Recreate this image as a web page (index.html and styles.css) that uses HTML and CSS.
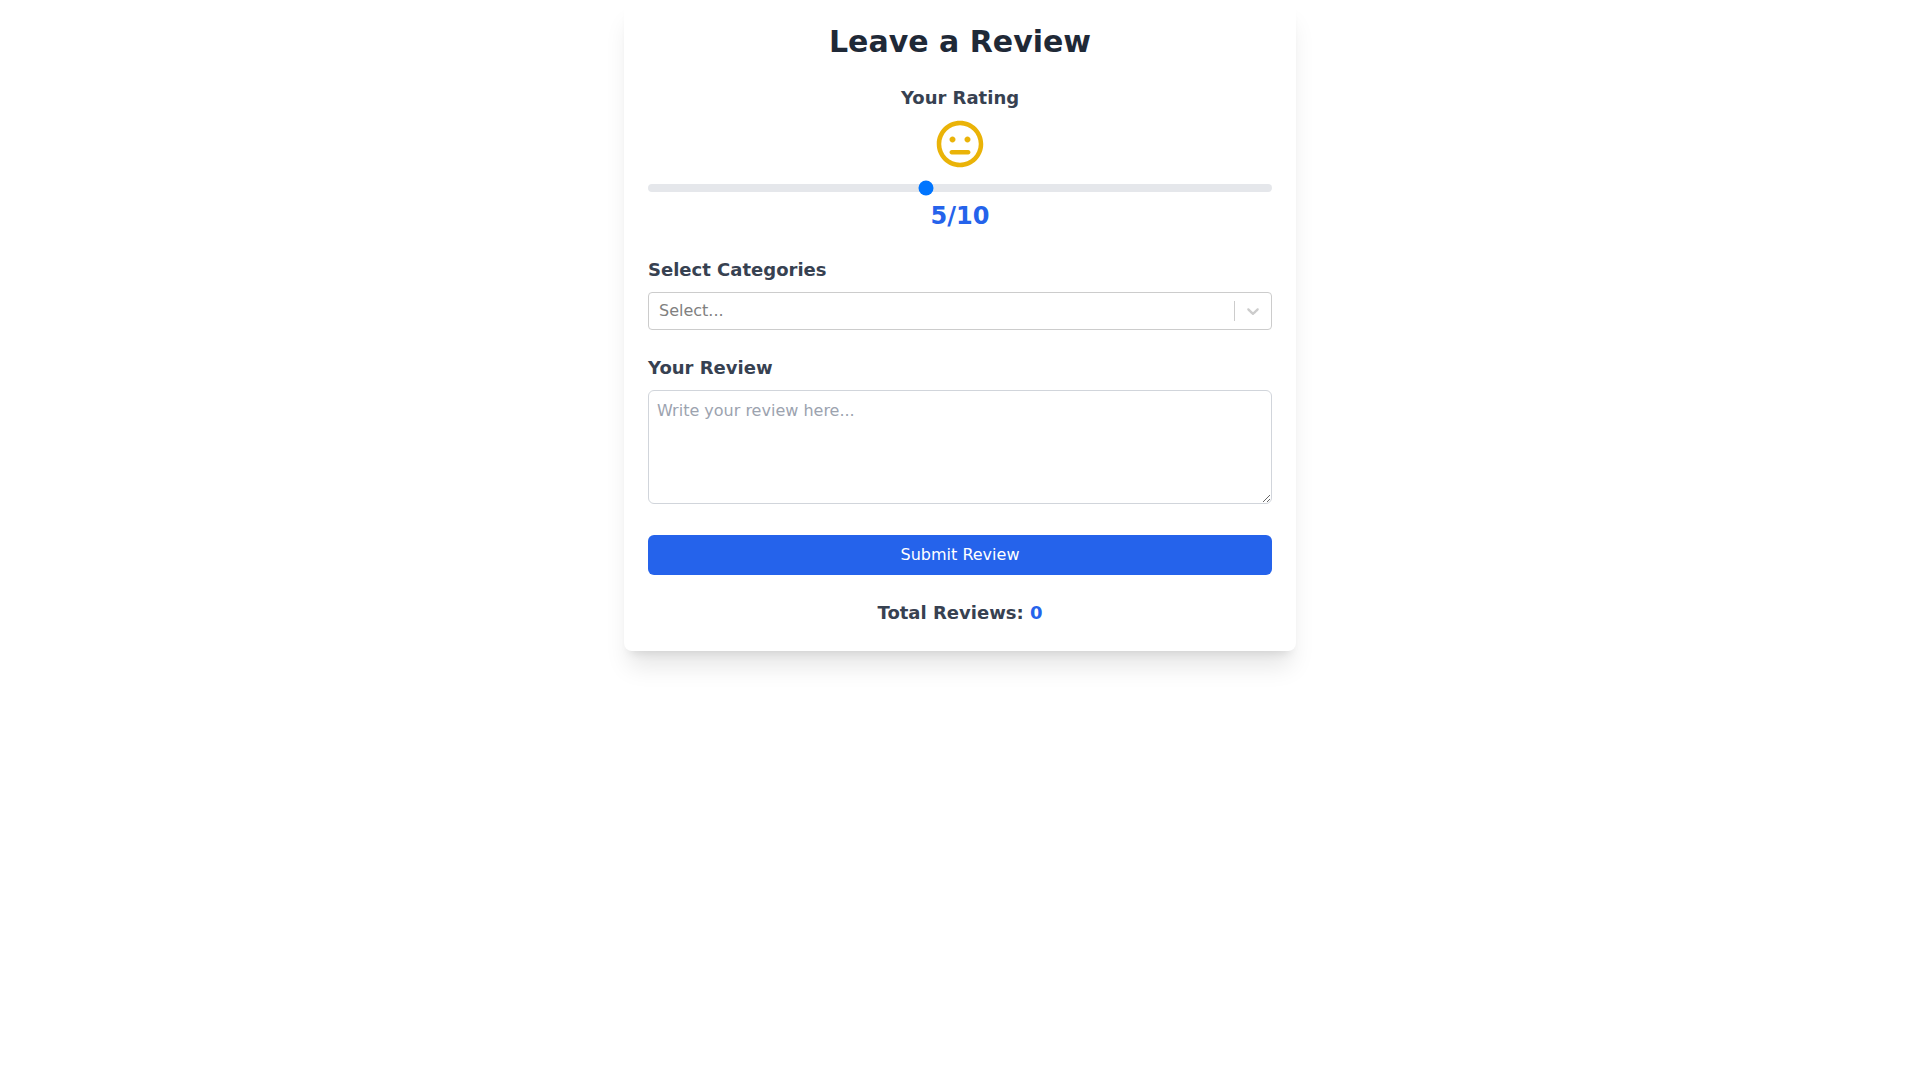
FILE: index.html
```html
<!DOCTYPE html>
<html lang="en">
<head>
  <meta charset="UTF-8" />
  <meta name="viewport" content="width=device-width, initial-scale=1.0" />
  <title>Leave a Review</title>
  <link rel="stylesheet" href="styles.css">
</head>
<body>
  <main class="review-card">
    <h2>Leave a Review</h2>

    <form id="reviewForm">
      <div class="field rating">
        <label for="rating">Your Rating</label>
        <svg class="face" viewBox="0 0 496 512" fill="currentColor" aria-hidden="true">
          <path d="M248 8C111 8 0 119 0 256s111 248 248 248 248-111 248-248S385 8 248 8zm0 448c-110.3 0-200-89.7-200-200S137.7 56 248 56s200 89.7 200 200-89.7 200-200 200zm-80-216c17.7 0 32-14.3 32-32s-14.3-32-32-32-32 14.3-32 32 14.3 32 32 32zm160-64c-17.7 0-32 14.3-32 32s14.3 32 32 32 32-14.3 32-32-14.3-32-32-32zm8 144H160c-13.2 0-24 10.8-24 24s10.8 24 24 24h176c13.2 0 24-10.8 24-24s-10.8-24-24-24z"/>
        </svg>
        <input type="range" id="rating" min="1" max="10" value="5" />
        <p class="score"><span id="ratingValue">5</span>/10</p>
      </div>

      <div class="field">
        <label for="category">Select Categories</label>
        <div class="select-box">
          <select id="category">
            <option value="">Select...</option>
            <option value="service">Service</option>
            <option value="quality">Quality</option>
            <option value="price">Price</option>
          </select>
          <span class="separator"></span>
          <svg class="chevron" viewBox="0 0 20 20" fill="currentColor" aria-hidden="true">
            <path d="M4.516 7.548c0.436-0.446 1.043-0.481 1.576 0l3.908 3.747 3.908-3.747c0.533-0.481 1.141-0.446 1.574 0 0.436 0.445 0.408 1.197 0 1.615-0.406 0.418-4.695 4.502-4.695 4.502-0.217 0.223-0.502 0.335-0.787 0.335s-0.57-0.112-0.789-0.335c0 0-4.287-4.084-4.695-4.502s-0.436-1.17 0-1.615z"/>
          </svg>
        </div>
      </div>

      <div class="field">
        <label for="review">Your Review</label>
        <textarea id="review" rows="4" placeholder="Write your review here..."></textarea>
      </div>

      <button type="submit" class="submit">Submit Review</button>
    </form>

    <p class="total">Total Reviews: <span id="totalReviews">0</span></p>
  </main>

  <script>
    const form = document.getElementById('reviewForm');
    const rating = document.getElementById('rating');
    const ratingValue = document.getElementById('ratingValue');
    const review = document.getElementById('review');
    const totalReviews = document.getElementById('totalReviews');
    let total = 0;

    rating.addEventListener('input', () => {
      ratingValue.textContent = rating.value;
    });

    form.addEventListener('submit', e => {
      e.preventDefault();
      if (!review.value.trim()) return;
      total++;
      totalReviews.textContent = total;
      form.reset();
      ratingValue.textContent = rating.value;
    });
  </script>
</body>
</html>
```
FILE: styles.css
```css
* {
  margin: 0;
  padding: 0;
  box-sizing: border-box;
}
body {
  min-height: 100vh;
  font-family: "DejaVu Sans", sans-serif;
  font-size: 16px;
  line-height: 24px;
  background: #fff;
  color: #374151;
}

/* CARD */
.review-card {
  max-width: 672px;
  margin: 0 auto;
  padding: 24px;
  background: #fff;
  border-radius: 8px;
  box-shadow: 0 20px 25px -5px rgba(0,0,0,0.1), 0 8px 10px -6px rgba(0,0,0,0.1);
}
h2 {
  margin-bottom: 24px;
  font-size: 30px;
  line-height: 36px;
  text-align: center;
  color: #1f2937;
}

/* FIELDS */
.field {
  margin-bottom: 24px;
}
.field label {
  display: block;
  margin-bottom: 8px;
  font-size: 18px;
  line-height: 28px;
  font-weight: bold;
}

/* RATING */
.rating {
  text-align: center;
}
.face {
  display: block;
  width: 48px;
  height: 48px;
  margin: 0 auto 16px;
  color: #eab308;
}
.rating input {
  display: block;
  width: 100%;
  height: 8px;
  appearance: none;
  background: #e5e7eb;
  border-radius: 8px;
  cursor: pointer;
}
.score {
  margin-top: 8px;
  font-size: 24px;
  line-height: 32px;
  font-weight: bold;
  color: #2563eb;
}

/* CATEGORY SELECT */
.select-box {
  display: flex;
  align-items: center;
  border: 1px solid #ccc;
  border-radius: 4px;
  color: #ccc;
}
.select-box select {
  flex: 1;
  height: 36px;
  padding: 0 10px;
  appearance: none;
  border: none;
  background: transparent;
  font: inherit;
  color: #808080;
}
.separator {
  width: 1px;
  height: 20px;
  background: #ccc;
}
.chevron {
  width: 20px;
  height: 20px;
  margin: 0 8px;
}

/* REVIEW TEXT */
textarea {
  width: 100%;
  padding: 8px;
  border: 1px solid #d1d5db;
  border-radius: 6px;
  font: inherit;
  color: inherit;
}
textarea::placeholder {
  color: #9ca3af;
}

/* SUBMIT */
.submit {
  width: 100%;
  padding: 8px 16px;
  border: none;
  border-radius: 6px;
  background: #2563eb;
  color: #fff;
  font: inherit;
  cursor: pointer;
}
.submit:hover {
  background: #1d4ed8;
}
.total {
  margin-top: 24px;
  font-size: 18px;
  line-height: 28px;
  font-weight: bold;
  text-align: center;
}
.total span {
  color: #2563eb;
}
```
